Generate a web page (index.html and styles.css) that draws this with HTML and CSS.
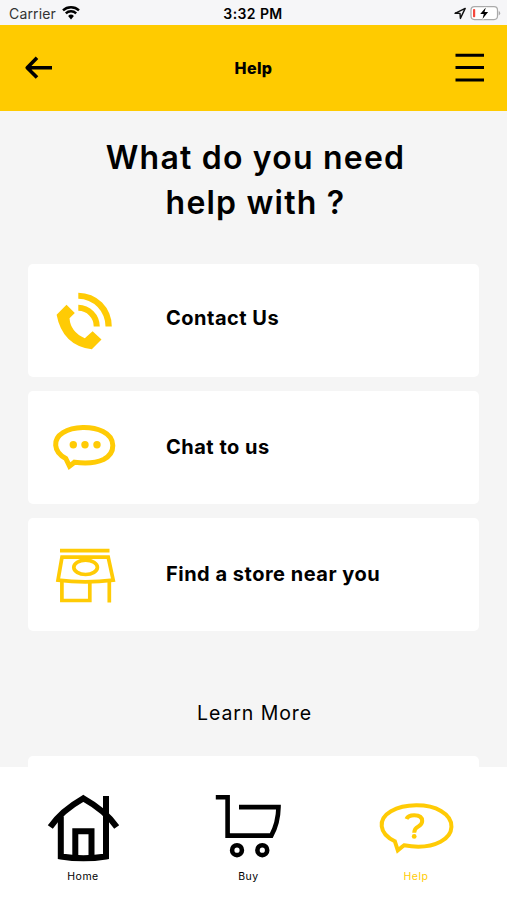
FILE: index.html
```
<!DOCTYPE html>
<html lang="en">
<head>
  <meta charset="UTF-8">
  <meta name="viewport" content="width=device-width, initial-scale=1.0">
  <title>Help</title>
  <link rel="stylesheet" href="styles.css">
</head>
<body>
  <!-- Status bar -->
  <div class="status">
    <div class="carrier">
      <span>Carrier</span>
      <svg width="18" height="14" viewBox="62 6 18 14">
        <path d="M63 10.4a11.7 11.7 0 0 1 16 0M65.8 13.3a7.6 7.6 0 0 1 10.4 0" fill="none" stroke="#000" stroke-width="2.4"/>
        <path d="M68.1 16a4.2 4.2 0 0 1 5.8 0L71 19.4z"/>
      </svg>
    </div>
    <span class="time">3:32 PM</span>
    <div class="battery">
      <svg width="48" height="18" viewBox="453 5 48 18">
        <path d="M455 13.3 465.2 8.4 460.4 18.4 460 13.4z" fill="none" stroke="#111" stroke-width="1.4" stroke-linejoin="round"/>
        <rect x="471" y="6.6" width="26.5" height="13" rx="3.5" fill="#fff" stroke="#aaa" stroke-width="1.2"/>
        <path d="M498.7 11v4.4q1.5-.6 1.5-2.2t-1.5-2.2z" fill="#aaa"/>
        <rect x="473" y="9" width="2.2" height="8.2" rx=".8" fill="#f5473d"/>
        <path d="M485.8 7.5 480.2 14h3.6l-1.3 5 5.6-6.9h-3.6z" stroke="#fff" stroke-width="2"/>
        <path d="M485.8 7.5 480.2 14h3.6l-1.3 5 5.6-6.9h-3.6z"/>
      </svg>
    </div>
  </div>

  <header>
    <svg width="30" height="26" viewBox="24 55 30 26" fill="none" stroke="#000" stroke-width="3.6">
      <path d="M37 57.8 27.2 67.7 37 77.5M27.5 67.7H52" stroke-linejoin="round"/>
    </svg>
    <h1>Help</h1>
    <svg width="30" height="30" viewBox="455 53 30 30" stroke="#000" stroke-width="3">
      <path d="M455.5 55.2h28.5M455.5 67.6h28.5M455.5 80h28.5"/>
    </svg>
  </header>

  <main>
    <h2>What do you need<br>help with ?</h2>

    <a class="card contact" href="#">
      <svg class="icon" width="70" height="70" viewBox="50 286 70 70" fill="#ffcb05">
        <path d="M66.5 304.8 74.8 313 69.5 318.3Q70.5 332 84.8 338.3L92.6 331.2 101.5 339.5 91.8 349.3Q62.5 345.5 56.6 314.7z"/>
        <path d="M78.3 292.7A33.5 33.5 0 0 1 111.8 326.4H105.5A27.4 27.4 0 0 0 78.3 298.8zM78.3 304.8A21.6 21.6 0 0 1 99.8 326.4H93.7A15.5 15.5 0 0 0 78.3 310.8z"/>
      </svg>
      <span>Contact Us</span>
    </a>

    <a class="card chat" href="#">
      <svg class="icon" width="70" height="70" viewBox="50 413 70 70">
        <path d="M65.8 458.5C52.8 451.5 52.8 439 63 432.7C73.5 426 92 426 103 431.5C116 438 116 453 103.5 459.5C95.5 463.2 87 463.8 74.5 462.2L69.5 466.2z" fill="none" stroke="#ffcb05" stroke-width="5"/>
        <g fill="#ffcb05"><circle cx="73.3" cy="444.8" r="3.7"/><circle cx="85" cy="444.8" r="3.7"/><circle cx="97" cy="444.8" r="3.7"/></g>
      </svg>
      <span>Chat to us</span>
    </a>

    <a class="card" href="#">
      <svg class="icon" width="70" height="70" viewBox="50 540 70 70" fill="none" stroke="#ffcb05" stroke-width="3.7">
        <path d="M60 550.7H109.5"/>
        <path d="M62 557.2H108.2L113.2 580.2Q85 583.5 58 580.2z"/>
        <ellipse cx="85.6" cy="567.3" rx="11.8" ry="7.2"/>
        <path d="M61.9 581V600.5H89.8V582M109.3 581V602.5"/>
      </svg>
      <span>Find a store near you</span>
    </a>

    <h3>Learn More</h3>
    <div class="card"></div>
  </main>

  <!-- Bottom tabs -->
  <nav>
    <a href="#">
      <svg width="76" height="76" viewBox="45 790 76 76" fill="none" stroke="#000" stroke-width="6">
        <path d="M50.3 827Q61 811 83.3 798.3Q106 811 116.7 827"/>
        <path d="M60.8 816.5V856.5Q83.5 860.2 106 856.5V796"/>
        <path d="M75.3 858V831.2H91.5V858"/>
      </svg>
      <span>Home</span>
    </a>
    <a href="#">
      <svg width="76" height="76" viewBox="211 790 76 76" fill="none" stroke="#000" stroke-width="4.6">
        <path d="M215.8 797.2H227.6V835.6H271.3Q278.2 823 278.5 807.1H239"/>
        <circle cx="237" cy="850.2" r="4.9"/>
        <circle cx="262.3" cy="850.2" r="4.9"/>
      </svg>
      <span>Buy</span>
    </a>
    <a class="active" href="#">
      <svg width="80" height="76" viewBox="376 790 80 76" fill="none" stroke="#ffcb05" stroke-width="4">
        <path d="M394.8 841.2C378.5 833.5 377.5 819 391 811.2C404.5 803.5 428 803.3 441 811C455.5 819.5 454.5 834.5 440.5 841.7C430.5 847 417.5 847.7 404 845.3L397.8 850.3z"/>
        <path d="M406.5 819Q408 815.2 414.2 815.2Q422.2 815.2 422.2 821Q422.2 824.3 418.3 826.5Q414.3 828.5 414.2 832.8"/>
        <circle cx="414.2" cy="836.4" r="2.4" fill="#ffcb05" stroke="none"/>
      </svg>
      <span>Help</span>
    </a>
  </nav>
</body>
</html>
```

FILE: styles.css
```
* {
  box-sizing: border-box;
}
body {
  font-family: Inter, sans-serif;
  margin: 0;
  height: 900px;
  display: flex;
  flex-direction: column;
  overflow: hidden;
  background-color: #f5f5f5;
  color: #000;
}
svg {
  display: block;
  flex: none;
}
a {
  color: inherit;
  text-decoration: none;
}
.status {
  display: grid;
  grid-template-columns: 1fr auto 1fr;
  align-items: center;
  height: 25px;
  flex: none;
  padding: 2px 6px 0 9px;
  background-color: #f6f6f8;
  font-size: 14px;
  line-height: 22px;
}
.carrier {
  display: flex;
  gap: 6px;
  color: #333;
  letter-spacing: 0.15px;
}
.carrier svg {
  margin-top: 3px;
}
.time {
  padding-right: 4px;
  font-weight: 600;
  letter-spacing: 0.4px;
}
.battery {
  display: flex;
  justify-content: flex-end;
}
header {
  display: flex;
  align-items: center;
  justify-content: space-between;
  height: 86px;
  flex: none;
  padding: 0 22px 1px 24px;
  background-color: #ffcb00;
}
h1 {
  margin: 0 2px 0 0;
  font-size: 16px;
  font-weight: 800;
  letter-spacing: 0.4px;
}
main {
  flex: 1;
  min-height: 0;
  overflow: hidden;
  padding: 24px 28px 0;
}
h2 {
  margin: 0 0 39px;
  padding-left: 4px;
  text-align: center;
  font-size: 32px;
  line-height: 45px;
  font-weight: 600;
  letter-spacing: 1.2px;
}
.card {
  display: flex;
  align-items: center;
  height: 113px;
  margin-bottom: 14px;
  padding-left: 22px;
  border-radius: 5px;
  background-color: #fff;
  font-size: 20px;
  font-weight: 700;
  letter-spacing: 0.5px;
}
.card span {
  margin: 0 0 1px 46px;
}
.card.contact span {
  margin-bottom: 6px;
}
.card.chat span {
  margin-bottom: 1px;
}
h3 {
  margin: 67px 0 28px;
  padding-left: 2px;
  text-align: center;
  font-size: 19.5px;
  line-height: 30px;
  font-weight: 400;
  letter-spacing: 0.9px;
}
nav {
  display: flex;
  justify-content: space-between;
  flex: none;
  height: 133px;
  padding: 23px 51px 0 45px;
  background-color: #fff;
}
nav a {
  display: flex;
  flex-direction: column;
  align-items: center;
  font-size: 10.5px;
  line-height: 22px;
  letter-spacing: 0.5px;
}
nav .active {
  color: #ffcb05;
}
```
